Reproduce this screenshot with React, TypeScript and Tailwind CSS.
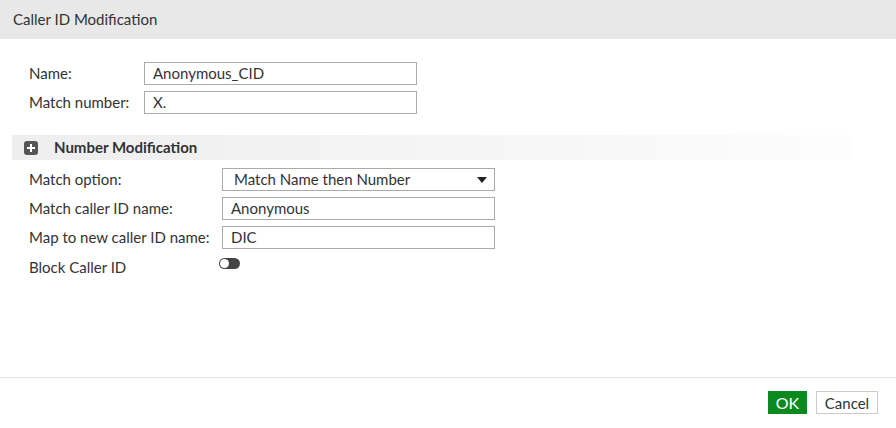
export default function App() {
  const font = { fontFamily: "Lato, 'Open Sans', sans-serif" };
  return (
    <div className="flex h-[428px] w-[896px] flex-col bg-white text-[15px] text-[#333]" style={font}>
      <div className="flex h-[39px] items-center bg-[#e8e8e8] pl-[13px] text-[15px] text-[#333]">Caller ID Modification</div>

      <div className="flex-1 pl-[12px] pt-[23px]">
        <div className="flex flex-col gap-[6px] pl-[17px]">
          <Row label="Name:" labelW="w-[115px]" value="Anonymous_CID" />
          <Row label="Match number:" labelW="w-[115px]" value="X." />
        </div>

        <div className="mt-[21px] flex h-[25px] w-[838px] items-center bg-gradient-to-r from-[#eeeeee] via-[#f6f6f6] via-60% to-[#fdfdfd]">
          <div className="ml-[12px] flex h-[14px] w-[14px] items-center justify-center rounded-[3px] bg-[#555]">
            <svg width="10" height="10" viewBox="0 0 10 10">
              <rect x="4" y="1" width="2" height="8" fill="white" />
              <rect x="1" y="4" width="8" height="2" fill="white" />
            </svg>
          </div>
          <span className="ml-[16px] font-bold text-[#333]">Number Modification</span>
        </div>

        <div className="mt-[8px] flex flex-col gap-[6px] pl-[17px]">
          <div className="flex items-center">
            <span className="w-[193px]">Match option:</span>
            <div className="flex h-[23px] w-[273px] items-center justify-between border border-[#aaa] pl-[11px] pr-[7px]">
              <span>Match Name then Number</span>
              <svg width="10" height="6" viewBox="0 0 10 6">
                <path d="M0 0h10L5 6z" fill="#222" />
              </svg>
            </div>
          </div>
          <Row label="Match caller ID name:" labelW="w-[193px]" value="Anonymous" />
          <Row label="Map to new caller ID name:" labelW="w-[193px]" value="DIC" />
          <div className="flex items-start">
            <span className="w-[190px] pt-[1px]">Block Caller ID</span>
            <div className="mt-[3px] flex h-[11px] w-[21px] items-center rounded-full bg-[#444] pl-[1px]">
              <div className="h-[9px] w-[9px] rounded-full bg-white" />
            </div>
          </div>
        </div>
      </div>

      <div className="flex h-[51px] items-start justify-end gap-[9px] border-t border-[#e3e3e3] pr-[18px] pt-[13px]">
        <button className="h-[23px] w-[39px] bg-[#0a8a1e] text-[16px] text-white">OK</button>
        <button className="h-[23px] w-[62px] border border-[#ccc] bg-white text-[15px] text-[#333]">Cancel</button>
      </div>
    </div>
  );
}

function Row({ label, labelW, value }: { label: string; labelW: string; value: string }) {
  return (
    <div className="flex items-center">
      <span className={labelW}>{label}</span>
      <div className="flex h-[23px] w-[273px] items-center border border-[#aaa] pl-[8px]">{value}</div>
    </div>
  );
}
